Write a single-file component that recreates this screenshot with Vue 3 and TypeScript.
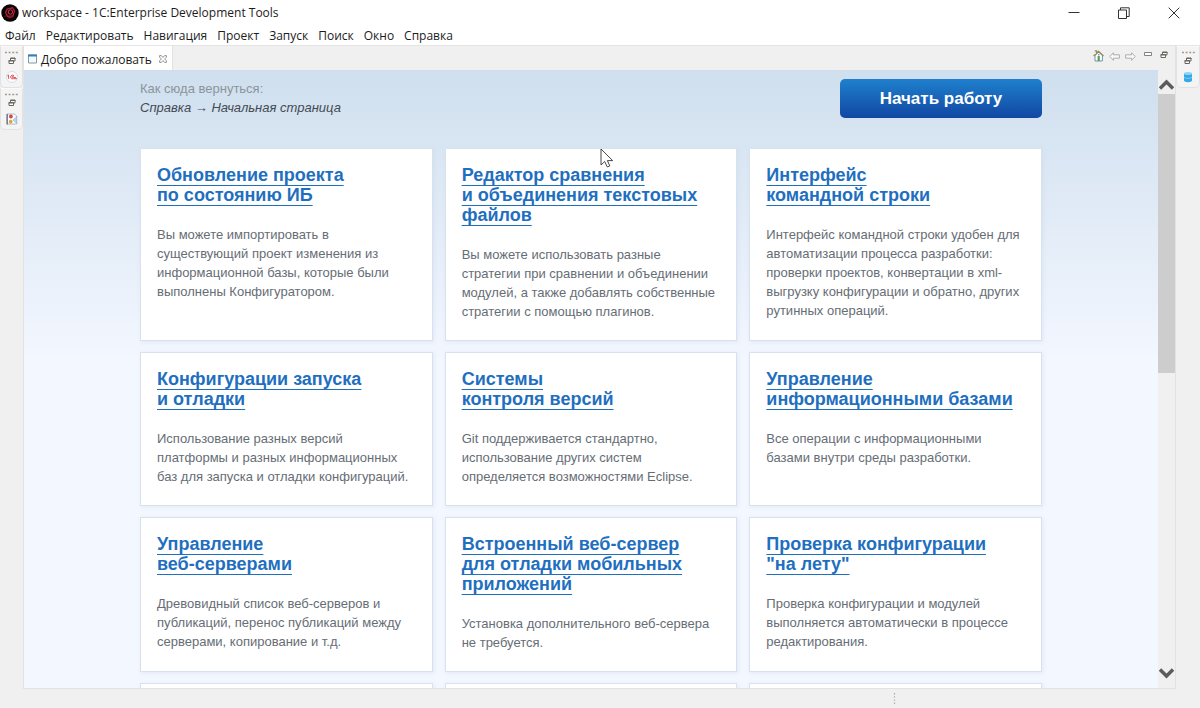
<script setup lang="ts">
interface Card {
  title: string[]
  text: string[]
}

const menu: string[] = ['Файл', 'Редактировать', 'Навигация', 'Проект', 'Запуск', 'Поиск', 'Окно', 'Справка']

const cards: Card[] = [
  {
    title: ['Обновление проекта', 'по состоянию ИБ'],
    text: ['Вы можете импортировать в', 'существующий проект изменения из', 'информационной базы, которые были', 'выполнены Конфигуратором.'],
  },
  {
    title: ['Редактор сравнения', 'и объединения текстовых', 'файлов'],
    text: ['Вы можете использовать разные', 'стратегии при сравнении и объединении', 'модулей, а также добавлять собственные', 'стратегии с помощью плагинов.'],
  },
  {
    title: ['Интерфейс', 'командной строки'],
    text: ['Интерфейс командной строки удобен для', 'автоматизации процесса разработки:', 'проверки проектов, конвертации в xml-', 'выгрузку конфигурации и обратно, других', 'рутинных операций.'],
  },
  {
    title: ['Конфигурации запуска', 'и отладки'],
    text: ['Использование разных версий', 'платформы и разных информационных', 'баз для запуска и отладки конфигураций.'],
  },
  {
    title: ['Системы', 'контроля версий'],
    text: ['Git поддерживается стандартно,', 'использование других систем', 'определяется возможностями Eclipse.'],
  },
  {
    title: ['Управление', 'информационными базами'],
    text: ['Все операции с информационными', 'базами внутри среды разработки.'],
  },
  {
    title: ['Управление', 'веб-серверами'],
    text: ['Древовидный список веб-серверов и', 'публикаций, перенос публикаций между', 'серверами, копирование и т.д.'],
  },
  {
    title: ['Встроенный веб-сервер', 'для отладки мобильных', 'приложений'],
    text: ['Установка дополнительного веб-сервера', 'не требуется.'],
  },
  {
    title: ['Проверка конфигурации', '"на лету"'],
    text: ['Проверка конфигурации и модулей', 'выполняется автоматически в процессе', 'редактирования.'],
  },
]
</script>

<template>
  <div class="window">
    <header class="titlebar">
      <svg class="logo" width="18" height="18" viewBox="0 0 18 18" aria-hidden="true">
        <circle cx="9" cy="9" r="8.7" fill="#090506" />
        <path d="M6 5.2 L11.5 3.8 L13.6 7.2 L12 11.8 L6.4 12.4 L4.6 8.4 Z" fill="none" stroke="#b51c33" stroke-width="1.3" />
        <circle cx="9.4" cy="8" r="2.2" fill="none" stroke="#e0344c" stroke-width="1" />
        <path d="M3.6 12.6 L7 10.8 M6.6 14 L12.4 12.8" stroke="#8b1728" stroke-width="1" />
      </svg>
      <span class="caption">workspace - 1C:Enterprise Development Tools</span>
      <div class="syskeys">
        <button type="button" aria-label="Minimize">
          <svg width="12" height="12" viewBox="0 0 12 12"><path d="M0.5 5.5H11.5" stroke="#333" fill="none" /></svg>
        </button>
        <button type="button" aria-label="Restore">
          <svg width="12" height="12" viewBox="0 0 12 12"><path d="M0.5 3H8.5V11.5H0.5Z M2.5 3V0.8H11.2V9.5H8.5" stroke="#333" fill="none" /></svg>
        </button>
        <button type="button" aria-label="Close">
          <svg width="12" height="12" viewBox="0 0 12 12"><path d="M0.7 0.7L11.3 11.3M11.3 0.7L0.7 11.3" stroke="#333" fill="none" /></svg>
        </button>
      </div>
    </header>

    <nav class="menubar">
      <button v-for="item in menu" :key="item" type="button">{{ item }}</button>
    </nav>

    <div class="workbench">
      <aside class="trim">
        <div class="stack">
          <svg class="grip" width="13" height="3" viewBox="0 0 13 3"><path d="M0 1.5H13" stroke="#a49c90" stroke-width="1.5" stroke-dasharray="2 1.6" /></svg>
          <button type="button" aria-label="Restore">
            <svg width="8" height="8" viewBox="0 0 8 8"><path d="M2.5 3V1H7V4H5.5M1 3.5H5.5V6.5H1Z" stroke="#6b6660" fill="#fff" /><path d="M2 1.5H7.5M0.5 4H6" stroke="#6b6660" /></svg>
          </button>
          <button type="button" aria-label="1C">
            <svg width="12" height="12" viewBox="0 0 12 12">
              <circle cx="6" cy="6" r="5.5" fill="#fff" stroke="#d5dde8" />
              <path d="M1.4 4.8L2.6 4V7.8M8 4.6C6.8 3.6 4.7 4 4.7 6S6.3 7.8 7.4 7.7H11M7.8 5.7C6.9 5.2 6.1 5.4 6.2 6.2S7 6.7 7.6 6.6H10" stroke="#e23a43" stroke-width="0.9" fill="none" />
            </svg>
          </button>
        </div>
        <div class="stack">
          <svg class="grip" width="13" height="3" viewBox="0 0 13 3"><path d="M0 1.5H13" stroke="#a49c90" stroke-width="1.5" stroke-dasharray="2 1.6" /></svg>
          <button type="button" aria-label="Restore">
            <svg width="8" height="8" viewBox="0 0 8 8"><path d="M2.5 3V1H7V4H5.5M1 3.5H5.5V6.5H1Z" stroke="#6b6660" fill="#fff" /><path d="M2 1.5H7.5M0.5 4H6" stroke="#6b6660" /></svg>
          </button>
          <button type="button" aria-label="Outline">
            <svg width="12" height="12" viewBox="0 0 12 12">
              <path d="M1 1H8.5L10.5 3V11H1Z" fill="#fff" stroke="#a8b8ca" />
              <path d="M1.2 1V11.5" stroke="#6f7783" stroke-width="1.4" />
              <path d="M7 7L10.8 3.5V10.5Z" fill="#bcd8ee" stroke="#8fabc7" stroke-width="0.6" />
              <circle cx="4.9" cy="3.5" r="1.9" fill="#d8434a" />
              <circle cx="4.7" cy="8.7" r="1.9" fill="#dba73f" />
            </svg>
          </button>
        </div>
      </aside>

      <section class="view">
        <div class="tabs">
          <div class="tab">
            <svg width="9" height="10" viewBox="0 0 9 10">
              <path d="M0.5 1H8.5V9H0.5Z" fill="#f4fafc" stroke="#829aa5" />
              <path d="M0 1.5H9" stroke="#347ec0" stroke-width="2" />
            </svg>
            <span>Добро пожаловать</span>
            <button type="button" aria-label="Close tab">
              <svg width="8" height="8" viewBox="0 0 8 8"><path d="M0.6 0.6H2.4L4 2.4L5.6 0.6H7.4V2.2L5.6 4L7.4 5.8V7.4H5.6L4 5.6L2.4 7.4H0.6V5.8L2.4 4L0.6 2.2Z" fill="#fff" stroke="#7a7a7a" stroke-width="0.8" /></svg>
            </button>
          </div>
          <div class="tools">
            <button type="button" aria-label="Home">
              <svg width="11" height="12" viewBox="0 0 11 12">
                <path d="M2 5.5V11H9.4V5.5L5.6 2Z" fill="#fff" stroke="#6486ad" stroke-width="0.9" />
                <path d="M1.8 0.8H3.5V4M0.6 6L5.6 1.3L10.5 6" fill="none" stroke="#9a875b" stroke-width="1.3" />
                <path d="M5.7 6V11" stroke="#54a34a" stroke-width="2.2" />
                <path d="M5 4.8H6.5" stroke="#456fa5" />
              </svg>
            </button>
            <button type="button" aria-label="Back">
              <svg width="11" height="9" viewBox="0 0 11 9"><path d="M0.7 4.5L4.4 0.8V2.8H10.4V6.2H4.4V8.2Z" fill="#f8f8f8" stroke="#adadad" /></svg>
            </button>
            <button type="button" aria-label="Forward">
              <svg width="11" height="9" viewBox="0 0 11 9"><path d="M10.3 4.5L6.6 0.8V2.8H0.6V6.2H6.6V8.2Z" fill="#f8f8f8" stroke="#adadad" /></svg>
            </button>
            <button type="button" class="mini" aria-label="Minimize view">
              <svg width="8" height="8" viewBox="0 0 8 8"><path d="M0.5 1.5H7.5V4.5H0.5Z" fill="#fff" stroke="#85817c" /></svg>
            </button>
            <button type="button" class="mini" aria-label="Restore view">
              <svg width="8" height="8" viewBox="0 0 8 8"><path d="M2.5 3V1H7V4H5.5M1 3.5H5.5V6.5H1Z" stroke="#6b6660" fill="#fff" /><path d="M2 1.5H7.5M0.5 4H6" stroke="#6b6660" /></svg>
            </button>
          </div>
        </div>

        <div class="browser">
          <main class="page">
            <div class="inner">
              <div class="top">
                <div class="hint">
                  <p>Как сюда вернуться:</p>
                  <p><em>Справка → Начальная страница</em></p>
                </div>
                <button type="button" class="start">Начать работу</button>
              </div>
              <div class="grid">
                <article v-for="card in cards" :key="card.text[0]" class="card">
                  <h2>
                    <a href="#"><template v-for="(line, i) in card.title" :key="line"><br v-if="i > 0">{{ line }}</template></a>
                  </h2>
                  <p><template v-for="(line, i) in card.text" :key="line"><br v-if="i > 0">{{ line }}</template></p>
                </article>
                <article v-for="n in 3" :key="n" class="card blank"></article>
              </div>
            </div>
          </main>
          <div class="scroll">
            <button type="button" class="up" aria-label="Scroll up">
              <svg width="15" height="12" viewBox="0 0 15 12"><path d="M1 9.5L7.5 3L14 9.5" fill="none" stroke="#5c5c5c" stroke-width="3.4" /></svg>
            </button>
            <div class="track"><div class="thumb"></div></div>
            <button type="button" class="down" aria-label="Scroll down">
              <svg width="15" height="12" viewBox="0 0 15 12"><path d="M1 2.5L7.5 9L14 2.5" fill="none" stroke="#5c5c5c" stroke-width="3.4" /></svg>
            </button>
          </div>
        </div>
      </section>

      <aside class="trim">
        <div class="stack">
          <svg class="grip" width="13" height="3" viewBox="0 0 13 3"><path d="M0 1.5H13" stroke="#a49c90" stroke-width="1.5" stroke-dasharray="2 1.6" /></svg>
          <button type="button" aria-label="Restore">
            <svg width="8" height="8" viewBox="0 0 8 8"><path d="M2.5 3V1H7V4H5.5M1 3.5H5.5V6.5H1Z" stroke="#6b6660" fill="#fff" /><path d="M2 1.5H7.5M0.5 4H6" stroke="#6b6660" /></svg>
          </button>
          <button type="button" aria-label="Infobases">
            <svg width="12" height="12" viewBox="0 0 12 12">
              <path d="M2 2.5V9.5C2 11.8 10 11.8 10 9.5V2.5Z" fill="#35a9e6" />
              <ellipse cx="6" cy="2.6" rx="4" ry="1.5" fill="#8ed3f5" />
              <path d="M2 6.2C3 7.8 9 7.8 10 6.2" fill="none" stroke="#8ed3f5" stroke-width="0.8" />
            </svg>
          </button>
        </div>
      </aside>
    </div>

    <footer class="status">
      <svg width="3" height="12" viewBox="0 0 3 12"><path d="M1.5 0V12" stroke="#aaa" stroke-width="1.2" stroke-dasharray="1.4 1.8" /></svg>
    </footer>

    <svg class="cursor" width="14" height="20" viewBox="0 0 14 20" aria-hidden="true">
      <path d="M1 1V17L4.7 13.5L7.3 19L9.8 17.9L7.4 12.6H12.7Z" fill="#fff" stroke="#333" stroke-width="0.9" />
    </svg>
  </div>
</template>

<style>
body {
  margin: 0;
}
</style>

<style scoped>
.window {
  position: relative;
  display: flex;
  flex-direction: column;
  height: 100vh;
  overflow: hidden;
  background: #f0f0f0;
  color: #1c1c1c;
  font-family: "Open Sans", "Noto Sans", sans-serif;
  font-size: 12px;
}

button {
  display: flex;
  align-items: center;
  justify-content: center;
  padding: 0;
  border: 0;
  background: none;
  color: inherit;
  font: inherit;
}

svg {
  display: block;
  flex: none;
}

h2,
p {
  margin: 0;
}

.titlebar {
  display: flex;
  align-items: center;
  flex: none;
  height: 25px;
  padding: 0 1px;
  background: #fff;
}

.caption {
  margin-left: 3px;
}

.syskeys {
  display: flex;
  margin-left: auto;
}

.syskeys button {
  width: 50px;
  height: 25px;
}

.menubar {
  display: flex;
  flex: none;
  gap: 10px;
  height: 20px;
  padding: 0 5px;
  border-bottom: 1px solid #e4e4e4;
  background: #fff;
}

.workbench {
  display: flex;
  flex: 1;
  min-height: 0;
}

.trim {
  flex: none;
  width: 23px;
}

.view + .trim {
  width: 24px;
}

.stack {
  display: flex;
  flex-direction: column;
  align-items: center;
  box-sizing: border-box;
  height: 42px;
  padding-top: 4px;
  border: 1px solid #e2e2e2;
  border-top-color: #fafafa;
  border-radius: 0 0 5px 5px;
  background: #f4f4f4;
}

.stack button {
  margin-top: 3px;
}

.stack button + button {
  margin-top: 6px;
}

.view {
  display: flex;
  flex: 1;
  flex-direction: column;
  min-width: 0;
  border: 1px solid #e2e2e2;
  border-top: 0;
}

.tabs {
  display: flex;
  flex: none;
  justify-content: space-between;
  height: 24px;
}

.tab {
  display: flex;
  align-items: center;
  padding: 2px 5px 0 4px;
  border-right: 1px solid #e2e2e2;
  background: #fff;
}

.tab span {
  margin: 0 7px 0 4px;
}

.tools {
  display: flex;
  gap: 5px;
  height: 20px;
  padding-right: 7px;
}

.tools .mini {
  height: 18px;
  margin-left: 3px;
}

.browser {
  display: flex;
  flex: 1;
  min-height: 0;
}

.page {
  flex: 1;
  overflow: hidden;
  background: linear-gradient(#cfdfee, #f3f7ff 290px);
  font-family: "Liberation Sans", Arial, sans-serif;
}

.inner {
  width: 80%;
  max-width: 902px;
  margin: 0 auto;
}

.top {
  display: flex;
  align-items: flex-start;
  justify-content: space-between;
  height: 69px;
  padding-top: 9px;
}

.hint {
  color: #8b949c;
  font-size: 13px;
  line-height: 19px;
}

.hint em {
  color: #434b54;
}

.start {
  width: 202px;
  height: 39px;
  border-radius: 5px;
  background: linear-gradient(#1f80ce, #1147a2);
  color: #fff;
  font-size: 17px;
  font-weight: 700;
}

.grid {
  display: grid;
  grid-template-columns: repeat(3, 1fr);
  gap: 11px 12px;
}

.card {
  padding: 16px 16px 19px;
  border: 1px solid #d8e2ee;
  background: #fff;
  box-shadow: 1px 1px 4px #c8d4e466;
}

.card.blank {
  min-height: 118px;
}

.card h2 {
  font-size: 18px;
  line-height: 20px;
}

.card a {
  color: #1f6fc0;
  text-decoration: underline;
  text-decoration-thickness: 1px;
  text-decoration-skip-ink: none;
  text-underline-offset: 4px;
}

.card p {
  margin-top: 20px;
  color: #666d75;
  font-size: 13px;
  line-height: 19px;
}

.scroll {
  display: flex;
  flex: none;
  flex-direction: column;
  width: 17px;
  background: #f0f0f0;
}

.scroll button {
  height: 24px;
}

.scroll .up {
  padding-top: 6px;
}

.scroll .down {
  padding-bottom: 6px;
}

.track {
  flex: 1;
}

.thumb {
  height: 49%;
  background: #cdcdcd;
}

.status {
  display: flex;
  flex: none;
  align-items: center;
  justify-content: flex-end;
  height: 19px;
  padding-right: 304px;
}

.cursor {
  position: absolute;
  top: 148px;
  left: 600px;
}
</style>
